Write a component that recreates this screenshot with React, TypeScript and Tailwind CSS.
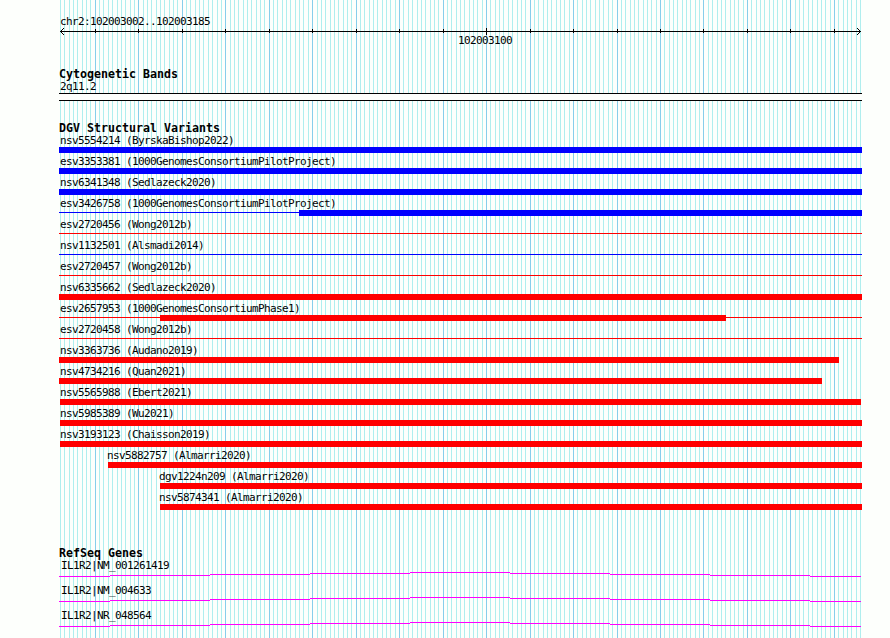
type Variant = {
  label: string;
  color: string;
  labelX?: number;
  bar?: [number, number];
  line?: boolean;
};

const BLUE = 'bg-[#0000ff]';
const RED = 'bg-[#ff0000]';

const variants: Variant[] = [
  { label: 'nsv5554214 (ByrskaBishop2022)', color: BLUE, bar: [0, 803] },
  { label: 'esv3353381 (1000GenomesConsortiumPilotProject)', color: BLUE, bar: [0, 803] },
  { label: 'nsv6341348 (Sedlazeck2020)', color: BLUE, bar: [0, 803] },
  { label: 'esv3426758 (1000GenomesConsortiumPilotProject)', color: BLUE, bar: [240, 803], line: true },
  { label: 'esv2720456 (Wong2012b)', color: RED, line: true },
  { label: 'nsv1132501 (Alsmadi2014)', color: BLUE, line: true },
  { label: 'esv2720457 (Wong2012b)', color: RED, line: true },
  { label: 'nsv6335662 (Sedlazeck2020)', color: RED, bar: [0, 803] },
  { label: 'esv2657953 (1000GenomesConsortiumPhase1)', color: RED, bar: [101, 667], line: true },
  { label: 'esv2720458 (Wong2012b)', color: RED, line: true },
  { label: 'nsv3363736 (Audano2019)', color: RED, bar: [0, 780] },
  { label: 'nsv4734216 (Quan2021)', color: RED, bar: [0, 763] },
  { label: 'nsv5565988 (Ebert2021)', color: RED, bar: [1, 802] },
  { label: 'nsv5985389 (Wu2021)', color: RED, bar: [1, 803] },
  { label: 'nsv3193123 (Chaisson2019)', color: RED, bar: [1, 803] },
  { label: 'nsv5882757 (Almarri2020)', color: RED, bar: [49, 803], labelX: 48 },
  { label: 'dgv1224n209 (Almarri2020)', color: RED, bar: [101, 803], labelX: 100 },
  { label: 'nsv5874341 (Almarri2020)', color: RED, bar: [101, 803], labelX: 100 },
];

const genes = ['IL1R2|NM_001261419', 'IL1R2|NM_004633', 'IL1R2|NR_048564'];

const START = 102003002;
const positions = Array.from({ length: 185 }, (_, i) => START + i);
const toX = (pos: number) => Math.round(60 + ((pos - START) * 800) / 184);

function Grid() {
  return (
    <svg className="absolute inset-0" width="890" height="638" shapeRendering="crispEdges">
      {positions.map((pos) => (
        <rect
          key={pos}
          x={toX(pos)}
          y={0}
          width={1}
          height={638}
          fill={pos % 10 === 0 ? '#87ceeb' : '#afeeee'}
        />
      ))}
    </svg>
  );
}

function Ruler() {
  return (
    <svg className="block h-[12px] w-[890px]" viewBox="0 0 890 12" shapeRendering="crispEdges">
      <rect x="60" y="5" width="801" height="1" />
      {[1, 2, 3].map((d) => (
        <g key={d}>
          <rect x={60 + d} y={5 - d} width="1" height="1" />
          <rect x={60 + d} y={5 + d} width="1" height="1" />
          <rect x={860 - d} y={5 - d} width="1" height="1" />
          <rect x={860 - d} y={5 + d} width="1" height="1" />
        </g>
      ))}
      {positions
        .filter((pos) => pos % 10 === 0)
        .map((pos) => (
          <rect
            key={pos}
            x={toX(pos)}
            y={pos % 100 === 0 ? 2 : 3}
            width="1"
            height={pos % 100 === 0 ? 7 : 4}
          />
        ))}
    </svg>
  );
}

function Label({ text, x = 1 }: { text: string; x?: number }) {
  return (
    <div
      className="h-[12px] text-[11px] leading-[12px] tracking-[-0.62px] whitespace-pre"
      style={{ marginLeft: x }}
    >
      {text}
    </div>
  );
}

function Heading({ text }: { text: string }) {
  return (
    <h2 className="h-[13px] text-[11.63px] leading-[13px] font-bold whitespace-pre">{text}</h2>
  );
}

function VariantRow({ variant }: { variant: Variant }) {
  const { label, color, labelX, bar, line } = variant;
  return (
    <div className="h-[21px]">
      <Label text={label} x={labelX} />
      <div className="relative h-[6px] w-[803px]">
        {line && <div className={`absolute top-[2px] h-px w-full ${color}`} />}
        {bar && (
          <div
            className={`absolute top-0 h-[6px] ${color}`}
            style={{ left: bar[0], width: bar[1] - bar[0] }}
          />
        )}
      </div>
    </div>
  );
}

// Intron connector, drawn as a very shallow arch
function GeneRow({ name }: { name: string }) {
  const steps = [0, 51, 151, 251, 351, 451, 551, 651, 751, 802];
  return (
    <div className="h-[25px]">
      <Label text={name} x={2} />
      <svg className="block h-[5px] w-[803px]" viewBox="0 0 803 5" shapeRendering="crispEdges">
        {steps.slice(0, -1).map((x, i) => (
          <rect key={x} x={x} y={Math.abs(4 - i)} width={steps[i + 1] - x} height="1" fill="#ff00ff" />
        ))}
      </svg>
    </div>
  );
}

export default function App() {
  return (
    <div className="relative h-[638px] w-[890px] overflow-hidden bg-[#fdfffc] font-['DejaVu_Sans_Mono','Liberation_Mono',monospace] text-black">
      <Grid />
      <main className="relative">
        <header className="h-[68px] pt-[16px]">
          <div className="h-[10px] pl-[60px]">
            <Label text="chr2:102003002..102003185" x={0} />
          </div>
          <Ruler />
          <div className="-mt-[3px] pl-[458px]">
            <Label text="102003100" x={0} />
          </div>
        </header>

        <div className="pl-[59px]">
          <section className="h-[54px]">
            <Heading text="Cytogenetic Bands" />
            <Label text="2q11.2" />
            <div className="h-[8px] w-[803px] border-y border-black bg-[#fdfffc]" />
          </section>

          <section className="h-[425px]">
            <Heading text="DGV Structural Variants" />
            {variants.map((variant) => (
              <VariantRow key={variant.label} variant={variant} />
            ))}
          </section>

          <section>
            <Heading text="RefSeq Genes" />
            {genes.map((gene) => (
              <GeneRow key={gene} name={gene} />
            ))}
          </section>
        </div>
      </main>
    </div>
  );
}
